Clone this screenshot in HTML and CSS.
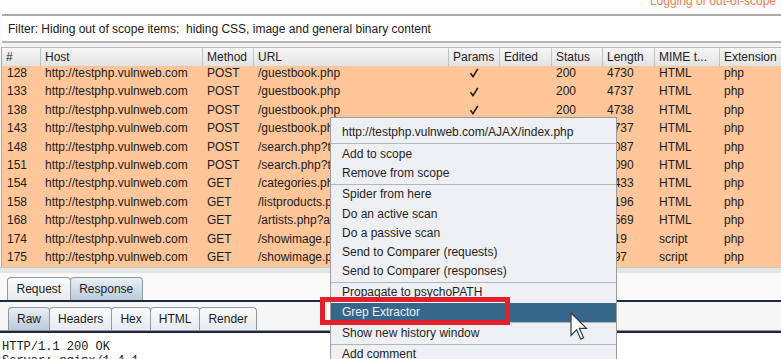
FILE: index.html
```html
<!DOCTYPE html>
<html>
<head>
<meta charset="utf-8">
<link rel="stylesheet" href="styles.css">
</head>
<body>
<div class="app">
  <div class="topbar"><span class="notice">Logging of out-of-scope</span></div>
  <div class="filter">Filter: Hiding out of scope items;&nbsp; hiding CSS, image and general binary content</div>
  <div class="gap"></div>
  <div class="table">
    <div class="row head">
      <div class="c">#</div><div class="c">Host</div><div class="c">Method</div><div class="c">URL</div><div class="c">Params</div><div class="c">Edited</div><div class="c">Status</div><div class="c">Length</div><div class="c">MIME t...</div><div class="c">Extension</div>
    </div>
    <div class="body">
      <div class="row first"><div class="c">128</div><div class="c">http://testphp.vulnweb.com</div><div class="c">POST</div><div class="c">/guestbook.php</div><div class="c chk"><svg viewBox="0 0 10 10" width="10" height="10"><path d="M1.5 5.2 L4 8.6 L8.8 0.8" fill="none" stroke="#1b1b1b" stroke-width="1.6"/></svg></div><div class="c"></div><div class="c">200</div><div class="c">4730</div><div class="c">HTML</div><div class="c">php</div></div>
      <div class="row"><div class="c">133</div><div class="c">http://testphp.vulnweb.com</div><div class="c">POST</div><div class="c">/guestbook.php</div><div class="c chk"><svg viewBox="0 0 10 10" width="10" height="10"><path d="M1.5 5.2 L4 8.6 L8.8 0.8" fill="none" stroke="#1b1b1b" stroke-width="1.6"/></svg></div><div class="c"></div><div class="c">200</div><div class="c">4737</div><div class="c">HTML</div><div class="c">php</div></div>
      <div class="row"><div class="c">138</div><div class="c">http://testphp.vulnweb.com</div><div class="c">POST</div><div class="c">/guestbook.php</div><div class="c chk"><svg viewBox="0 0 10 10" width="10" height="10"><path d="M1.5 5.2 L4 8.6 L8.8 0.8" fill="none" stroke="#1b1b1b" stroke-width="1.6"/></svg></div><div class="c"></div><div class="c">200</div><div class="c">4738</div><div class="c">HTML</div><div class="c">php</div></div>
      <div class="row"><div class="c">143</div><div class="c">http://testphp.vulnweb.com</div><div class="c">POST</div><div class="c">/guestbook.php</div><div class="c chk"></div><div class="c"></div><div class="c">200</div><div class="c">4737</div><div class="c">HTML</div><div class="c">php</div></div>
      <div class="row"><div class="c">148</div><div class="c">http://testphp.vulnweb.com</div><div class="c">POST</div><div class="c">/search.php?test=query</div><div class="c chk"></div><div class="c"></div><div class="c">200</div><div class="c">4087</div><div class="c">HTML</div><div class="c">php</div></div>
      <div class="row"><div class="c">151</div><div class="c">http://testphp.vulnweb.com</div><div class="c">POST</div><div class="c">/search.php?test=query</div><div class="c chk"></div><div class="c"></div><div class="c">200</div><div class="c">4090</div><div class="c">HTML</div><div class="c">php</div></div>
      <div class="row"><div class="c">154</div><div class="c">http://testphp.vulnweb.com</div><div class="c">GET</div><div class="c">/categories.php</div><div class="c chk"></div><div class="c"></div><div class="c">200</div><div class="c">6433</div><div class="c">HTML</div><div class="c">php</div></div>
      <div class="row"><div class="c">158</div><div class="c">http://testphp.vulnweb.com</div><div class="c">GET</div><div class="c">/listproducts.php?cat=1</div><div class="c chk"></div><div class="c"></div><div class="c">200</div><div class="c">7196</div><div class="c">HTML</div><div class="c">php</div></div>
      <div class="row"><div class="c">168</div><div class="c">http://testphp.vulnweb.com</div><div class="c">GET</div><div class="c">/artists.php?artist=1</div><div class="c chk"></div><div class="c"></div><div class="c">200</div><div class="c">5569</div><div class="c">HTML</div><div class="c">php</div></div>
      <div class="row"><div class="c">174</div><div class="c">http://testphp.vulnweb.com</div><div class="c">GET</div><div class="c">/showimage.php?file=</div><div class="c chk"></div><div class="c"></div><div class="c">200</div><div class="c">219</div><div class="c">script</div><div class="c">php</div></div>
      <div class="row"><div class="c">175</div><div class="c">http://testphp.vulnweb.com</div><div class="c">GET</div><div class="c">/showimage.php?file=</div><div class="c chk"></div><div class="c"></div><div class="c">200</div><div class="c">297</div><div class="c">script</div><div class="c">php</div></div>
    </div>
  </div>
  <div class="hscroll"></div>
  <div class="tabs tabs1">
    <div class="tab">Request</div><div class="tab sel">Response</div>
  </div>
  <div class="rule"></div>
  <div class="tabs tabs2">
    <div class="tab sel">Raw</div><div class="tab">Headers</div><div class="tab">Hex</div><div class="tab">HTML</div><div class="tab">Render</div>
  </div>
  <div class="rule2"></div>
  <pre class="raw">HTTP/1.1 200 OK
Server: nginx/1.4.1</pre>
</div>

<div class="menu">
  <div class="item">http://testphp.vulnweb.com/AJAX/index.php</div>
  <div class="sep"></div>
  <div class="item">Add to scope</div>
  <div class="item">Remove from scope</div>
  <div class="sep"></div>
  <div class="item">Spider from here</div>
  <div class="item">Do an active scan</div>
  <div class="item">Do a passive scan</div>
  <div class="item">Send to Comparer (requests)</div>
  <div class="item">Send to Comparer (responses)</div>
  <div class="sep"></div>
  <div class="item">Propagate to psychoPATH</div>
  <div class="item hl">Grep Extractor</div>
  <div class="sep"></div>
  <div class="item">Show new history window</div>
  <div class="sep"></div>
  <div class="item">Add comment</div>
</div>
<div class="redbox"></div>
<svg class="cursor" width="18" height="28" viewBox="0 0 18 28">
  <path d="M1 1 L1 23.4 L6.6 17.8 L10.8 27.2 L13.6 25.8 L9.4 16.4 L16.4 16.4 Z" fill="#ffffff" stroke="#3a3a3a" stroke-width="1.2" stroke-linejoin="miter"/>
</svg>
</body>
</html>
```

FILE: styles.css
```css
html, body {
  margin: 0;
  padding: 0;
  width: 781px;
  height: 359px;
  overflow: hidden;
  background: #fbfbfb;
  font-family: "Liberation Sans", Arial, sans-serif;
  font-size: 12px;
  color: #1b1b1b;
}

.app {
  display: flex;
  flex-direction: column;
  width: 781px;
}

.topbar {
  height: 14px;
  overflow: hidden;
  display: flex;
  justify-content: flex-end;
  padding-right: 5px;
  background: #fdfdfd;
}

.notice {
  display: block;
  margin-top: -6px;
  line-height: 14px;
  color: #f47c50;
}

.filter {
  height: 25px;
  line-height: 27px;
  margin-left: 2px;
  padding-left: 6px;
  border-top: 2px solid #a9a9a9;
  border-bottom: 2px solid #b6b6b6;
  background: #ffffff;
  white-space: nowrap;
}

.gap {
  height: 4px;
  background: #f2f2f2;
}

.table {
  margin-left: 1px;
  border-left: 1px solid #a8a8a8;
  overflow: hidden;
}

.row {
  display: grid;
  grid-template-columns: 38px 162px 51px 195px 51px 52px 51px 52px 65px 80px;
  height: 18.4px;
  line-height: 18.4px;
  white-space: nowrap;
}

.row .c {
  padding-left: 5px;
  overflow: hidden;
}

.head {
  height: 18px;
  line-height: 19px;
  border-top: 1px solid #b9b9b9;
  background: linear-gradient(#f6f6f6, #e3e3e3);
  color: #222;
}

.head .c {
  padding-left: 4px;
  border-left: 1px solid #c3c3c3;
}

.head .c:first-child {
  border-left: none;
  padding-left: 4px;
}

.body {
  height: 201px;
  overflow: hidden;
  background: #ffc69a;
}

.body .row {
  background: #ffc69a;
}

.body .first {
  margin-top: -2px;
}

.row .chk {
  padding-left: 0;
  display: flex;
  align-items: center;
  justify-content: center;
}

.hscroll {
  height: 5px;
  border-top: 1px solid #cacaca;
  background: #e4e4e4;
}

.tabs {
  display: flex;
  align-items: flex-end;
  background: #f9f9f9;
}

.tabs1 {
  height: 27px;
  padding-left: 7px;
}

.tabs2 {
  height: 28px;
  padding-left: 8px;
  background: #f6f6f6;
}

.tab {
  height: 22px;
  line-height: 23px;
  padding: 0 8px;
  margin-right: -1px;
  border: 1px solid #8d9aa6;
  border-bottom: none;
  border-radius: 4px 4px 0 0;
  background: linear-gradient(#fbfbfc, #e7eaee);
  color: #1b1b1b;
}

.tabs1 .tab {
  height: 22px;
  padding: 0 8.5px;
}

.tab.sel {
  background: linear-gradient(#e9eff5, #b9cbdb);
}

.rule {
  height: 2px;
  background: #1f2a3a;
}

.rule2 {
  height: 2px;
  border-top: 1px solid #8e9aab;
  background: #1f2838;
}

.raw {
  margin: 0;
  padding: 7px 0 0 2px;
  font-family: "Liberation Mono", "Courier New", monospace;
  font-size: 12px;
  line-height: 14px;
  color: #202020;
  background: #ffffff;
  height: 40px;
}

.menu {
  position: absolute;
  left: 330px;
  top: 117px;
  width: 285px;
  padding-top: 5.4px;
  border: 1px solid #9c9c9c;
  background: #eef0f3;
}

.item {
  height: 19.2px;
  line-height: 19.2px;
  padding-left: 11px;
  white-space: nowrap;
  color: #1e1e1e;
}

.item.hl {
  background: #36668a;
  color: #eef3f7;
}

.sep {
  height: 1px;
  margin: 0.6px 0;
  background: #b3b5b9;
}

.redbox {
  position: absolute;
  left: 320px;
  top: 297px;
  width: 180px;
  height: 18px;
  border: 5px solid #e4202a;
}

.cursor {
  position: absolute;
  left: 570px;
  top: 312px;
}
```
